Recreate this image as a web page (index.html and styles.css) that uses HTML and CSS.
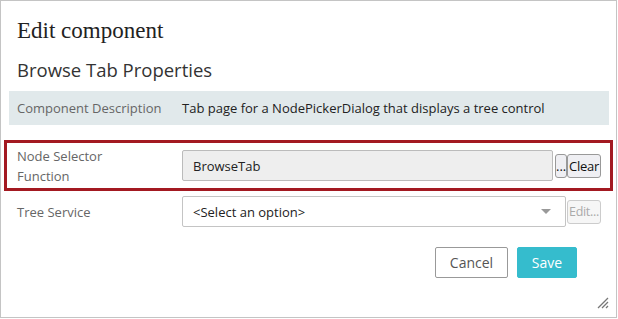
FILE: index.html
```html
<!DOCTYPE html>
<html lang="en">
<head>
    <meta charset="UTF-8">
    <title>Edit component</title>
    <link rel="stylesheet" href="styles.css">
</head>
<body>
    <div class="dialog">
        <h1>Edit component</h1>
        <h2>Browse Tab Properties</h2>

        <div class="desc-row">
            <span class="label">Component Description</span>
            <span class="value">Tab page for a NodePickerDialog that displays a tree control</span>
        </div>

        <div class="field-row highlighted">
            <label class="label">Node Selector<br>Function</label>
            <div class="field">
                <input type="text" class="text-input" value="BrowseTab" readonly>
                <button class="mini-btn dots">...</button>
                <button class="mini-btn clear">Clear</button>
            </div>
        </div>

        <div class="field-row">
            <label class="label">Tree Service</label>
            <div class="field">
                <div class="select">
                    <span>&lt;Select an option&gt;</span>
                    <span class="caret"></span>
                </div>
                <button class="mini-btn edit" disabled>Edit...</button>
            </div>
        </div>

        <div class="actions">
            <button class="btn btn-default">Cancel</button>
            <button class="btn btn-primary">Save</button>
        </div>

        <svg class="grip" width="12" height="12" viewBox="0 0 12 12">
            <path d="M1 11 L11 1 M5 11 L11 5 M9 11 L11 9" stroke="#777" stroke-width="1.3" fill="none"/>
        </svg>
    </div>
</body>
</html>
```

FILE: styles.css
```css
body {
    margin: 0;
    font-family: 'Open Sans', 'Noto Sans', sans-serif;
    background: #fff;
}

.dialog {
    position: relative;
    box-sizing: border-box;
    width: 617px;
    height: 318px;
    border: 1px solid #c4c4c4;
    padding: 15px 8px 0 8px;
}

h1 {
    margin: 0 0 0 8px;
    font-family: 'Liberation Serif', serif;
    font-size: 23px;
    font-weight: normal;
    line-height: 30px;
    color: #222;
}

h2 {
    margin: 11px 0 0 8px;
    font-size: 18.5px;
    font-weight: normal;
    line-height: 26px;
    color: #333;
}

.desc-row {
    display: flex;
    align-items: center;
    height: 34px;
    margin-top: 8px;
    width: 600px;
    background: #e1e9eb;
    font-size: 13px;
}

.label {
    width: 173px;
    padding-left: 8px;
    flex-shrink: 0;
    box-sizing: border-box;
    color: #666;
    font-size: 13px;
    line-height: 20px;
}

.value {
    color: #222;
}

.field-row {
    display: flex;
    align-items: center;
    margin-top: 5px;
    height: 31px;
}

.field-row.highlighted {
    margin: 15px -5px 0 -5px;
    height: 45px;
    border: 3px solid #a31921;
}

.field-row.highlighted .label {
    width: 175px;
    padding-left: 10px;
}

.field {
    display: flex;
    align-items: center;
}

.text-input {
    box-sizing: border-box;
    width: 371px;
    height: 31px;
    margin-right: 2px;
    padding: 0 10px;
    border: 1px solid #bbb;
    border-radius: 2px;
    background: #eee;
    font-family: inherit;
    font-size: 13px;
    color: #222;
}

.mini-btn {
    box-sizing: border-box;
    height: 24px;
    padding: 0;
    border: 1px solid #999;
    border-radius: 3px;
    background: #efeff3;
    font-family: inherit;
    font-size: 13px;
    color: #111;
}

.mini-btn.dots {
    width: 12px;
}

.mini-btn.clear {
    width: 34px;
}

.mini-btn.edit {
    width: 34px;
    margin-left: 1px;
    font-size: 12.5px;
    letter-spacing: -0.3px;
}

.mini-btn:disabled {
    border-color: #ccc;
    background: #f6f6f6;
    color: #aaa;
}

.clear {
    letter-spacing: -0.3px;
}

.select {
    box-sizing: border-box;
    display: flex;
    align-items: center;
    justify-content: space-between;
    width: 384px;
    height: 31px;
    padding: 0 14px 0 10px;
    border: 1px solid #c4c4c4;
    border-radius: 2px;
    font-size: 13px;
    color: #222;
}

.caret {
    width: 0;
    height: 0;
    border-left: 5px solid transparent;
    border-right: 5px solid transparent;
    border-top: 5px solid #999;
}

.actions {
    display: flex;
    justify-content: flex-end;
    gap: 9px;
    margin-top: 20px;
    padding-right: 31px;
}

.btn {
    height: 31px;
    border-radius: 2px;
    font-family: inherit;
    font-size: 14px;
}

.btn-default {
    width: 73px;
    border: 1px solid #999;
    background: #fff;
    color: #555;
}

.btn-primary {
    width: 60px;
    border: 1px solid #35bccd;
    background: #35bccd;
    color: #fff;
}

.grip {
    position: absolute;
    right: 7px;
    bottom: 8px;
}
```
